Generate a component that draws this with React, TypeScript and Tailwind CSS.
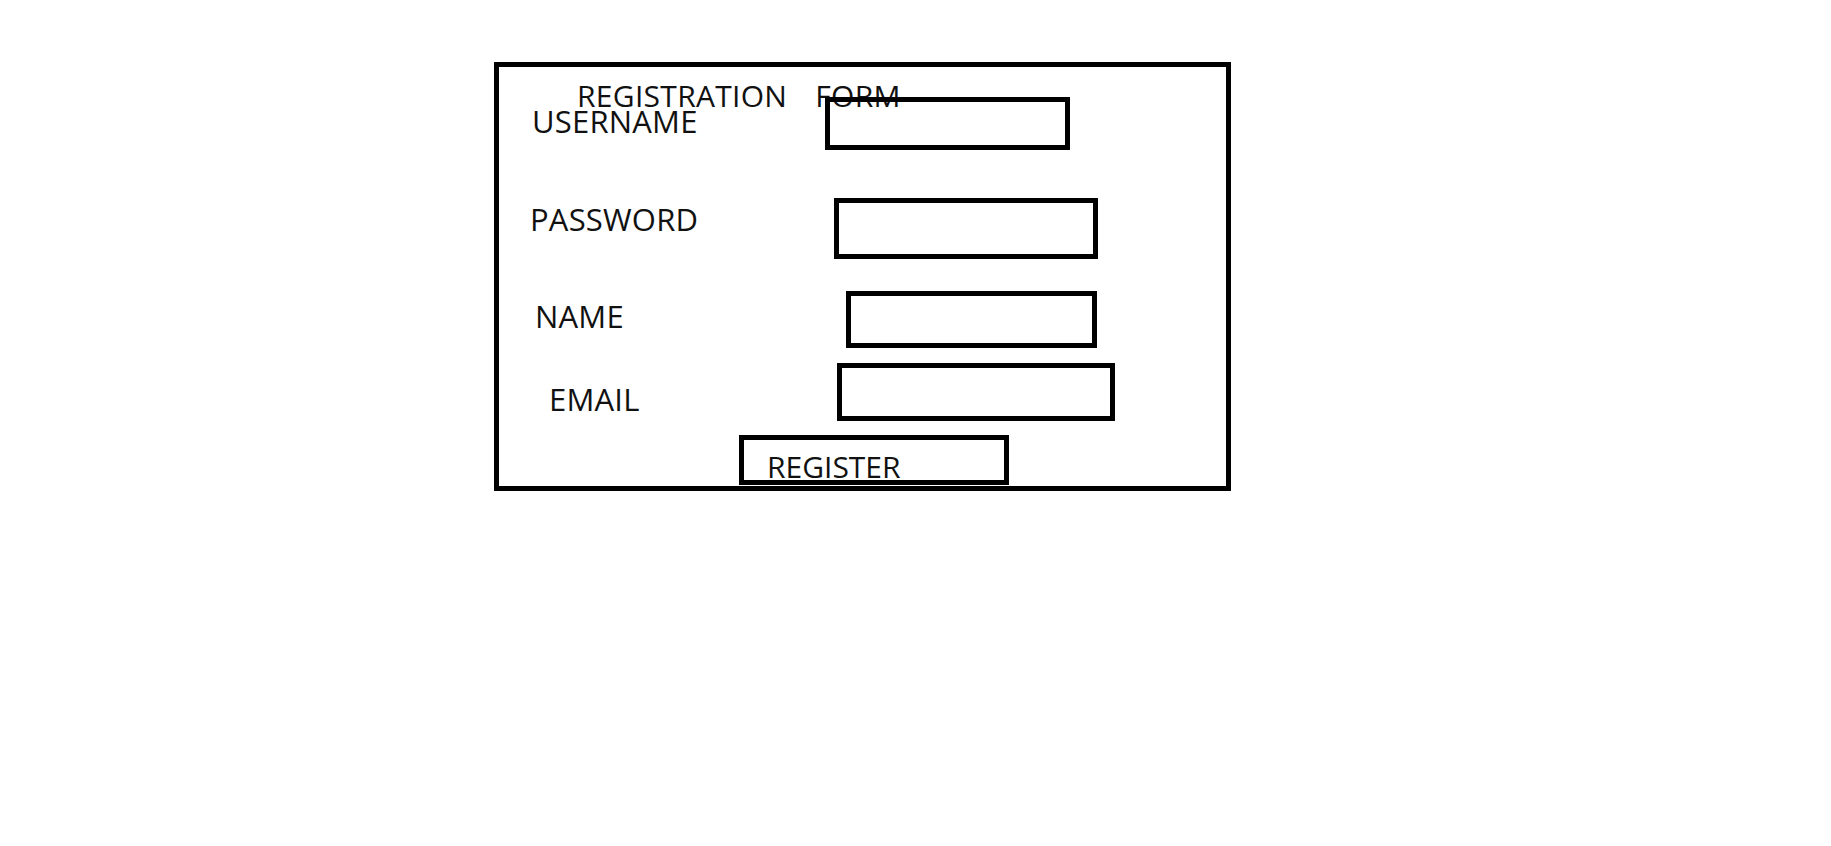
const font = { fontFamily: '"Open Sans", "Noto Sans", sans-serif' }

type Row = {
  label: string
  rowMt: string
  labelMt: string
  labelMl: string
  labelW: string
  inputW: string
  inputH: string
}

function FieldRow({ label, rowMt, labelMt, labelMl, labelW, inputW, inputH }: Row) {
  return (
    <div className={`flex items-start ${rowMt}`}>
      <label className={`shrink-0 leading-none text-[31px] tracking-[0.2px] text-[#111] ${labelMt} ${labelMl} ${labelW}`}>
        {label}
      </label>
      <input
        type="text"
        className={`shrink-0 border-[5px] border-black bg-transparent outline-none ${inputW} ${inputH}`}
      />
    </div>
  )
}

export default function App() {
  return (
    <div className="min-h-screen bg-white" style={font}>
      <div className="ml-[494px] pt-[62px]">
        <div className="w-[737px] h-[429px] border-[5px] border-black">

          {/* Title */}
          <div className="flex mt-[14px] ml-[78px] leading-none text-[30px] tracking-[0.3px] text-[#111]">
            <span>REGISTRATION</span>
            <span className="ml-[28px]">FORM</span>
          </div>

          <FieldRow
            label="USERNAME"
            rowMt="-mt-[14px]"
            labelMt="mt-[9px]"
            labelMl="ml-[33px]"
            labelW="w-[293px]"
            inputW="w-[245px]"
            inputH="h-[53px]"
          />
          <FieldRow
            label="PASSWORD"
            rowMt="mt-[48px]"
            labelMt="mt-[6px]"
            labelMl="ml-[31px]"
            labelW="w-[304px]"
            inputW="w-[264px]"
            inputH="h-[61px]"
          />
          <FieldRow
            label="NAME"
            rowMt="mt-[32px]"
            labelMt="mt-[10px]"
            labelMl="ml-[36px]"
            labelW="w-[311px]"
            inputW="w-[251px]"
            inputH="h-[57px]"
          />
          <FieldRow
            label="EMAIL"
            rowMt="mt-[15px]"
            labelMt="mt-[21px]"
            labelMl="ml-[50px]"
            labelW="w-[288px]"
            inputW="w-[278px]"
            inputH="h-[58px]"
          />

          {/* Register */}
          <div className="mt-[14px] ml-[240px]">
            <button className="flex items-start w-[270px] h-[50px] border-[5px] border-black pl-[23px] pt-[12px] leading-none text-[30px] text-[#111] overflow-visible">
              <span className="whitespace-nowrap">REGISTER</span>
            </button>
          </div>

        </div>
      </div>
    </div>
  )
}
